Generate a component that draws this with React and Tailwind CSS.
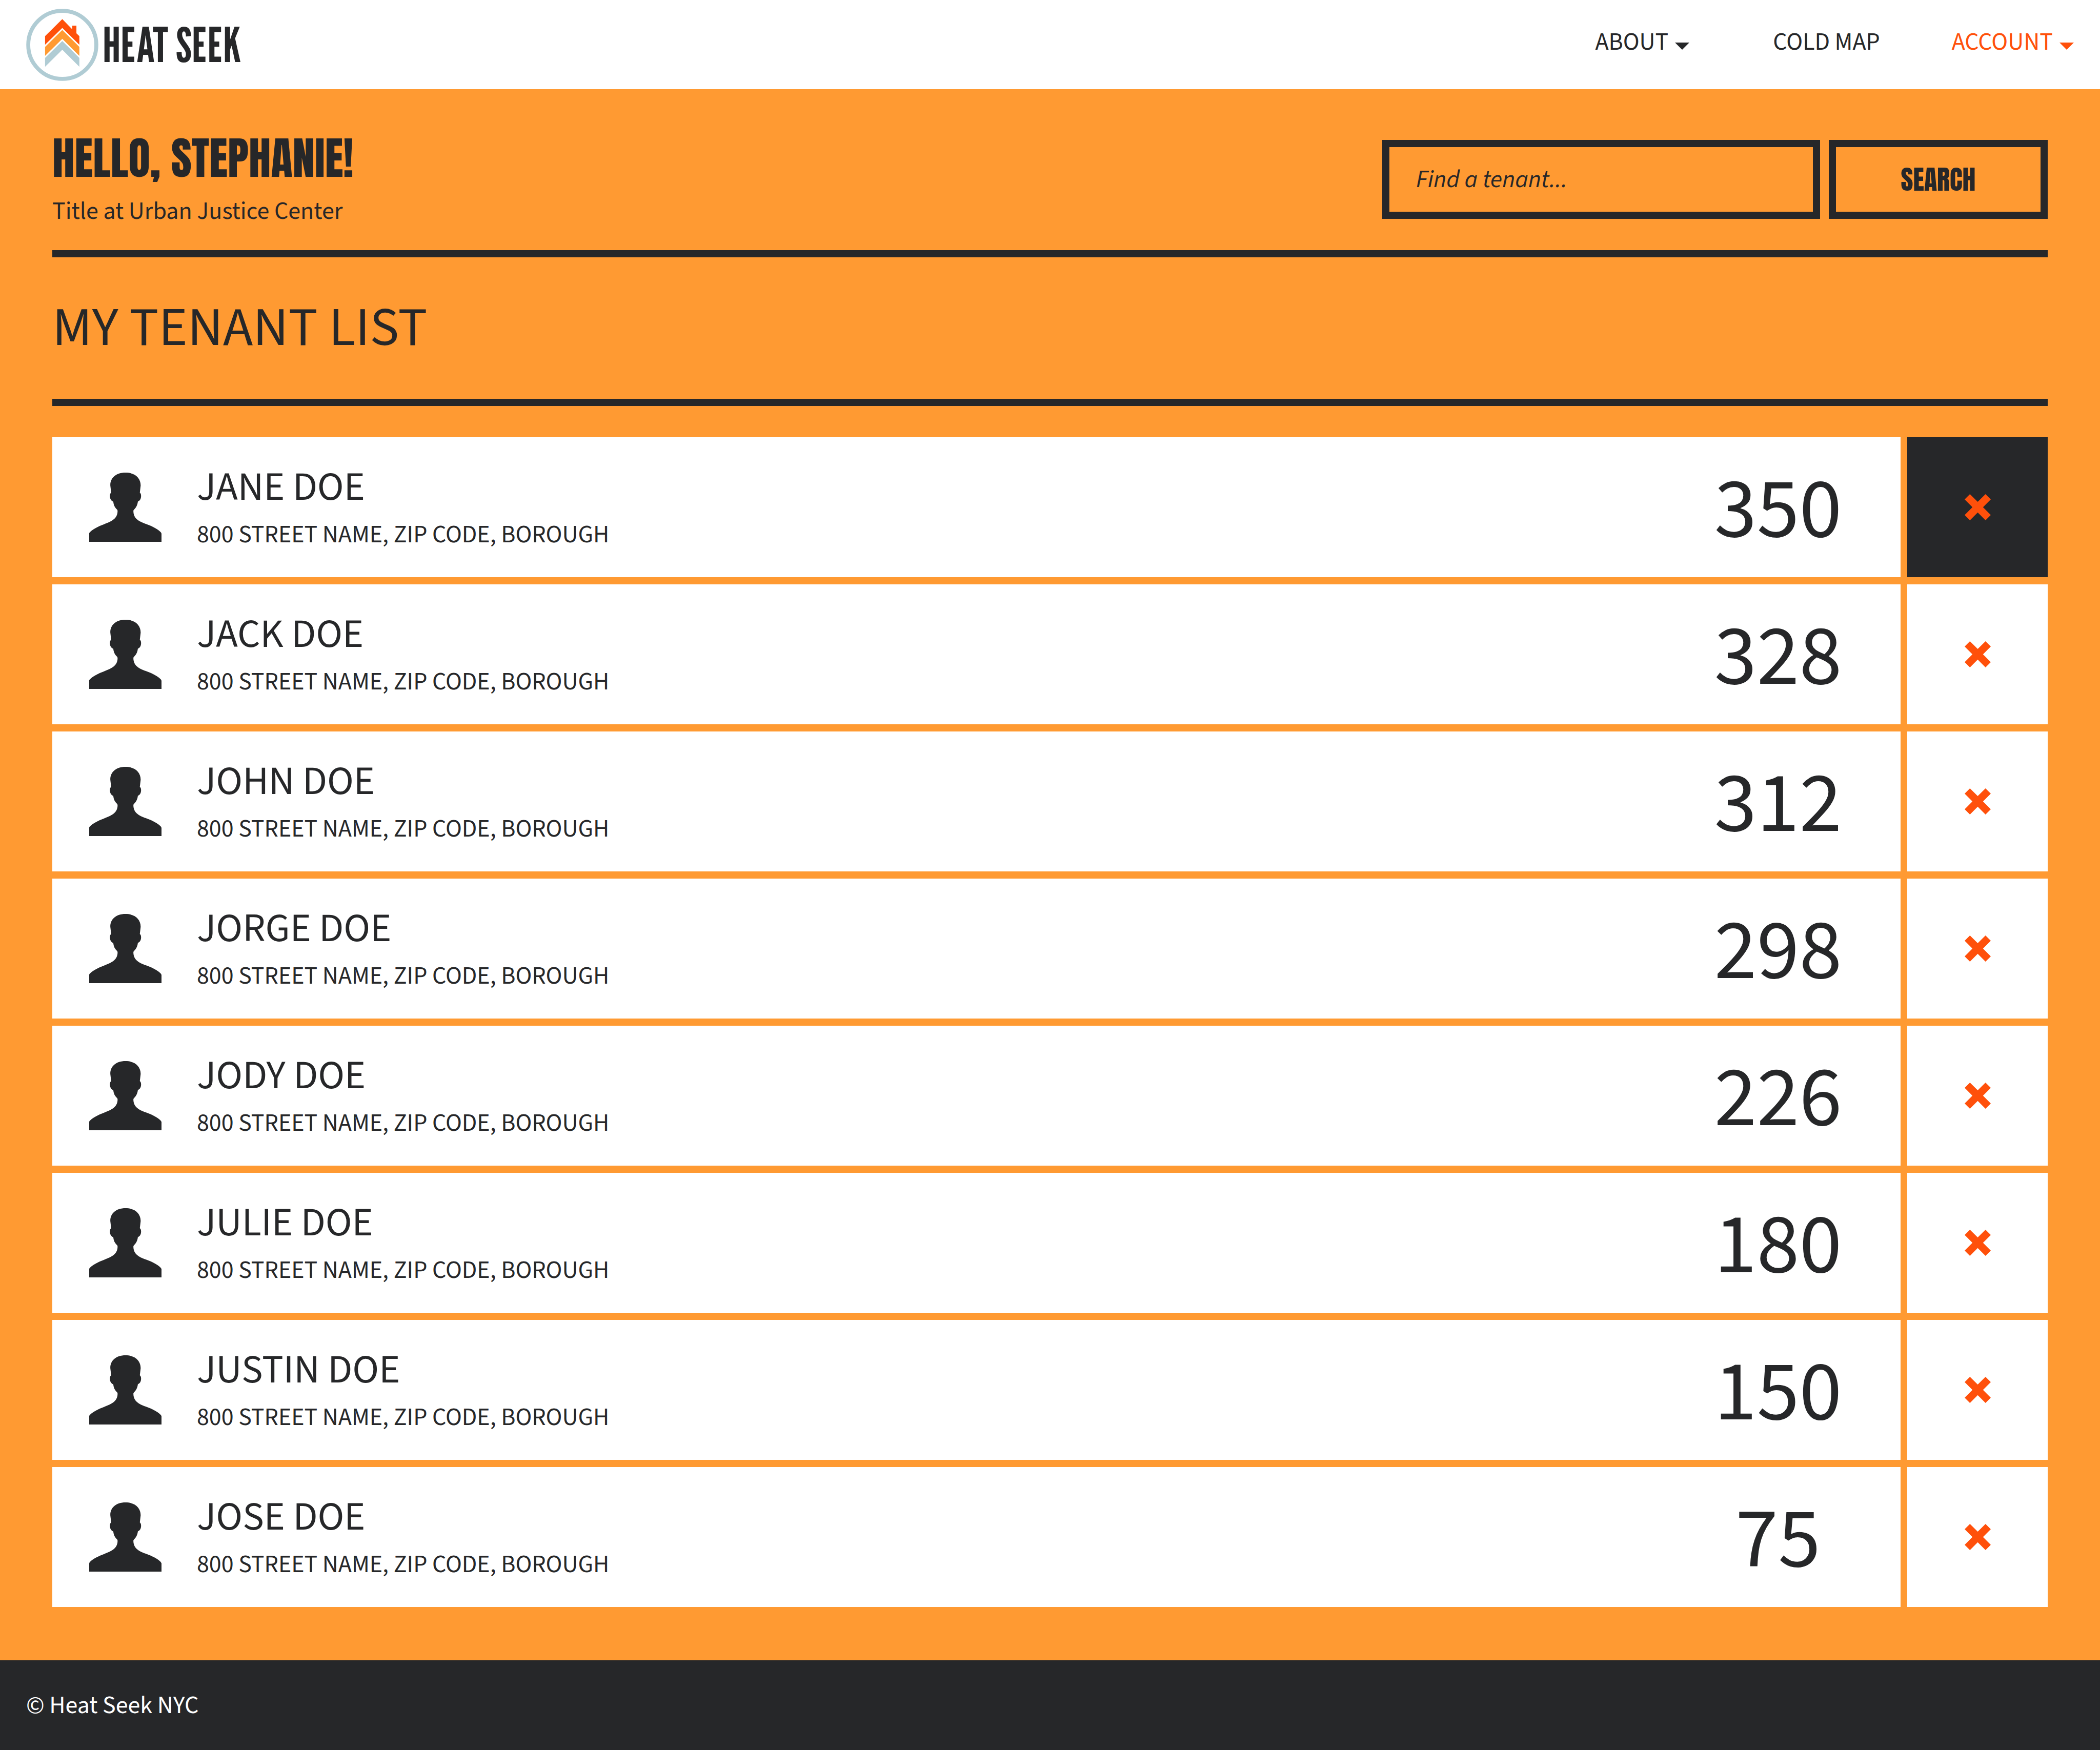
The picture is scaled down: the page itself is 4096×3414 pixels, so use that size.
import React from "react";

const tenants = [
  { name: "JANE DOE", score: 350, active: true },
  { name: "JACK DOE", score: 328 },
  { name: "JOHN DOE", score: 312 },
  { name: "JORGE DOE", score: 298 },
  { name: "JODY DOE", score: 226 },
  { name: "JULIE DOE", score: 180 },
  { name: "JUSTIN DOE", score: 150 },
  { name: "JOSE DOE", score: 75 },
];

function Logo() {
  return (
    <svg className="size-[141px]" viewBox="62 20 172 172" aria-hidden="true">
      <circle cx="148" cy="106" r="81" fill="none" stroke="#b0ccd4" strokeWidth="9.4" />
      <path fill="#ff500b" d="M148 44.7L171.800 69V60.300H181.600V78.700L188.600 85.300V105.700L148 65.700L107 105.700V85.300Z" />
      <path fill="#ff9a32" d="M148 70.700L188.600 111V132.300L148 91.700L107 132.300V111Z" />
      <path fill="#b0ccd4" d="M148 96.700L188.600 137V158L148 117.700L107 158V137Z" />
    </svg>
  );
}

function Caret() {
  return (
    <svg className="mt-[16px] h-[14px] w-[28px]" viewBox="0 0 28 14" aria-hidden="true">
      <path fill="currentColor" d="M0 0H28L14 14Z" />
    </svg>
  );
}

function Avatar() {
  return (
    <svg className="h-[135px] w-[141px]" viewBox="66 50 517 495" aria-hidden="true">
      <path
        fill="currentColor"
        d="M66 545V487C66 470 120 438 170 420C215 402 269 385 269 325C269 318 266 315 262 311C250 299 241 284 238 257C224 254 214 238 214 217C214 203 218 197 223 193L217 143C215 90 255 50 326 50C395 50 435 90 434 143L428 193C433 197 437 203 437 217C437 238 427 253 414 257C411 282 402 299 388 313C384 317 382 320 382 325C382 385 432 403 480 420C530 438 583 470 583 487V545Z"
      />
    </svg>
  );
}

function Cross() {
  return (
    <svg className="size-[51px]" viewBox="0 0 188 188" aria-hidden="true">
      <path fill="currentColor" d="M38 0L94 55L150 0L188 38L132 94L188 150L150 188L94 132L38 188L0 150L56 94L0 38Z" />
    </svg>
  );
}

export default function App() {
  return (
    <div className="flex min-h-screen flex-col bg-[#ff9a32] font-['Source_Sans_3','Noto_Sans_CJK_JP',sans-serif] text-[48px] text-[#262729]">
      <header className="flex h-[174px] items-center justify-between bg-white px-[51px]">
        <a href="#home" className="flex items-center gap-[8px]">
          <Logo />
          <span className="font-['League_Gothic','Oswald',sans-serif] text-[93px] leading-[110px]">HEAT SEEK</span>
        </a>
        <nav className="flex items-center gap-[140px] pb-[11px] leading-[60px]">
          <button type="button" className="flex items-center gap-[13px] pr-[23px]">
            ABOUT
            <Caret />
          </button>
          <a href="#cold-map">COLD MAP</a>
          <button type="button" className="flex items-center gap-[13px] text-[#ff500b]">
            ACCOUNT
            <Caret />
          </button>
        </nav>
      </header>

      <main className="flex-1 px-[102px] pb-[104px]">
        <section className="flex items-start justify-between border-b-[14px] border-[#262729] pt-[66px] pb-[42px]">
          <div>
            <h1 className="font-['Anton','Oswald',sans-serif] text-[87px] leading-[138px]">HELLO, STEPHANIE!</h1>
            <p className="leading-[68px]">Title at Urban Justice Center</p>
          </div>
          <form className="mt-[33px] flex gap-[17px]" onSubmit={(e) => e.preventDefault()}>
            <input
              type="search"
              aria-label="Find a tenant"
              placeholder="Find a tenant..."
              className="h-[154px] w-[854px] border-[14px] border-[#262729] bg-transparent px-[52px] italic outline-none placeholder:text-[#262729]"
            />
            <button
              type="submit"
              className="h-[154px] w-[427px] border-[14px] border-[#262729] font-['Anton','Oswald',sans-serif] text-[52px] leading-[120px]"
            >
              SEARCH
            </button>
          </form>
        </section>

        <h2 className="border-b-[14px] border-[#262729] py-[83px] text-[107px] leading-[110px]">MY TENANT LIST</h2>

        <ul className="flex flex-col gap-[14px] pt-[61px]">
          {tenants.map(({ name, score, active }) => (
            <li key={name} className="flex gap-[13px]">
              <article className="flex flex-1 items-center bg-white py-[44px] pl-[72px]">
                <Avatar />
                <div className="ml-[69px] flex-1">
                  <h3 className="text-[78px] leading-[108px]">{name}</h3>
                  <p className="leading-[77px]">800 STREET NAME, ZIP CODE, BOROUGH</p>
                </div>
                <strong className="w-[478px] pt-[10px] text-center text-[167px] leading-[170px] font-normal">{score}</strong>
              </article>
              <button
                type="button"
                aria-label={`Remove ${name}`}
                className={`flex w-[274px] items-center justify-center text-[#ff500b] ${active ? "bg-[#262729]" : "bg-white"}`}
              >
                <Cross />
              </button>
            </li>
          ))}
        </ul>
      </main>

      <footer className="flex h-[175px] items-center bg-[#262729] px-[51px] text-white">
        <p>© Heat Seek NYC</p>
      </footer>
    </div>
  );
}
